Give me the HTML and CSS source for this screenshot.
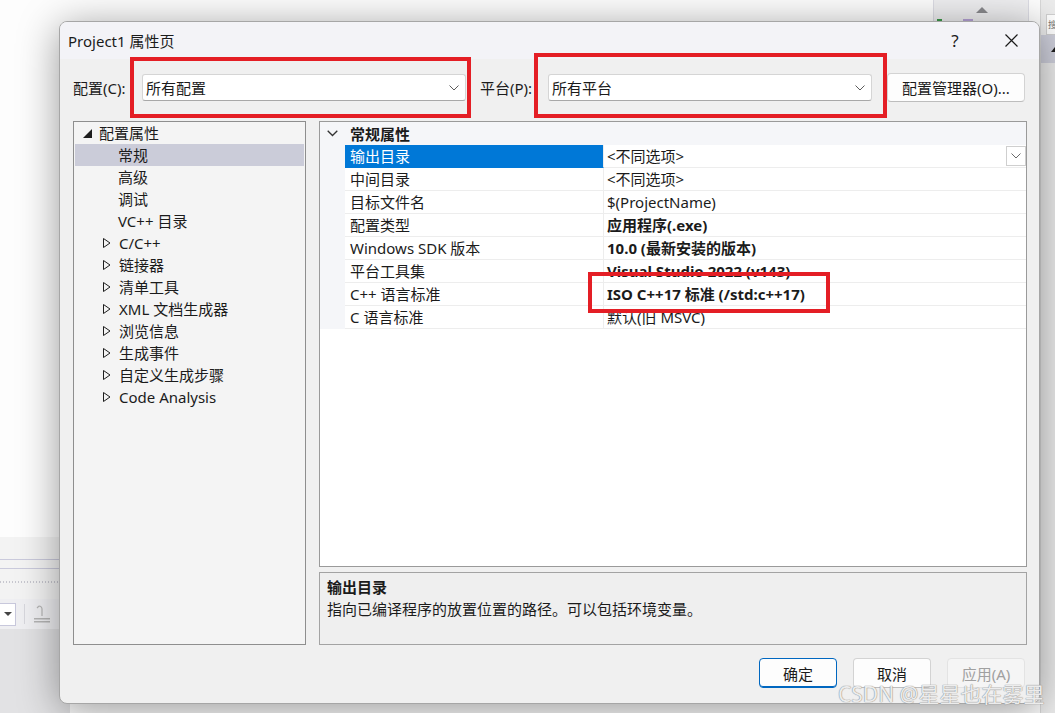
FILE: index.html
```html
<!DOCTYPE html>
<html lang="zh-CN">
<head>
<meta charset="UTF-8">
<meta name="viewport" content="width=device-width, initial-scale=1.0">
<title>Project1 属性页</title>
<link rel="stylesheet" href="styles.css">
</head>
<body>
<div class="desktop">
    <!-- what shows of Visual Studio behind the dialog -->
    <div class="vs-top">
        <span class="vs-arrow"></span>
        <span class="vs-mark green"></span>
        <span class="vs-mark purple"></span>
    </div>
    <div class="vs-bottom">
        <div class="vs-line"></div>
        <div class="vs-line"></div>
        <div class="vs-dots"></div>
        <div class="vs-toolbar">
            <div class="vs-combo"><span class="vs-caret"></span></div>
            <div class="vs-sep"></div>
            <svg class="vs-icon" width="18" height="18" viewBox="0 0 18 18">
                <path d="M9 11 V4 a3 3 0 0 0 -3 -3 M6 1 L4 3" fill="none" stroke="#b5b5b5" stroke-width="1.2"/>
                <rect x="1" y="13" width="16" height="1.5" fill="#b5b5b5"/>
                <rect x="1" y="16" width="16" height="1.5" fill="#b5b5b5"/>
            </svg>
        </div>
        <div class="vs-fill"></div>
    </div>
    <div class="vs-right">
        <div class="vs-search">搜</div>
        <div class="vs-head"><span class="vs-head-arrow"></span></div>
    </div>

    <div class="dialog">
        <div class="titlebar">
            <span class="title">Project1 属性页</span>
            <span class="cap-btn help">?</span>
            <span class="cap-btn close">
                <svg width="13" height="13" viewBox="0 0 13 13">
                    <path d="M0.5 0.5 L12.5 12.5 M12.5 0.5 L0.5 12.5" stroke="#1a1a1a" stroke-width="1.2"/>
                </svg>
            </span>
        </div>

        <div class="dlg-body">
            <div class="config-row">
                <label class="lbl">配置(C):</label>
                <div class="combo">
                    <span>所有配置</span>
                    <svg width="10" height="6" viewBox="0 0 10 6"><path d="M0.5 0.5 L5 5 L9.5 0.5" fill="none" stroke="#5c5c5c" stroke-width="1"/></svg>
                </div>
                <label class="lbl lbl-p">平台(P):</label>
                <div class="combo">
                    <span>所有平台</span>
                    <svg width="10" height="6" viewBox="0 0 10 6"><path d="M0.5 0.5 L5 5 L9.5 0.5" fill="none" stroke="#5c5c5c" stroke-width="1"/></svg>
                </div>
                <button class="btn btn-mgr">配置管理器(O)...</button>
            </div>

            <div class="main">
                <div class="tree">
                    <div class="node root">
                        <svg class="tri" width="9" height="9" viewBox="0 0 9 9"><polygon points="9,0 9,9 0,9" fill="#1e1e1e"/></svg>
                        <span>配置属性</span>
                    </div>
                    <div class="node leaf selected">常规</div>
                    <div class="node leaf">高级</div>
                    <div class="node leaf">调试</div>
                    <div class="node leaf">VC++ 目录</div>
                    <div class="node folder">
                        <svg class="tri" width="8" height="10" viewBox="0 0 8 10"><polygon points="0.5,0.5 7,5 0.5,9.5" fill="none" stroke="#1e1e1e" stroke-width="1"/></svg>
                        <span>C/C++</span>
                    </div>
                    <div class="node folder">
                        <svg class="tri" width="8" height="10" viewBox="0 0 8 10"><polygon points="0.5,0.5 7,5 0.5,9.5" fill="none" stroke="#1e1e1e" stroke-width="1"/></svg>
                        <span>链接器</span>
                    </div>
                    <div class="node folder">
                        <svg class="tri" width="8" height="10" viewBox="0 0 8 10"><polygon points="0.5,0.5 7,5 0.5,9.5" fill="none" stroke="#1e1e1e" stroke-width="1"/></svg>
                        <span>清单工具</span>
                    </div>
                    <div class="node folder">
                        <svg class="tri" width="8" height="10" viewBox="0 0 8 10"><polygon points="0.5,0.5 7,5 0.5,9.5" fill="none" stroke="#1e1e1e" stroke-width="1"/></svg>
                        <span>XML 文档生成器</span>
                    </div>
                    <div class="node folder">
                        <svg class="tri" width="8" height="10" viewBox="0 0 8 10"><polygon points="0.5,0.5 7,5 0.5,9.5" fill="none" stroke="#1e1e1e" stroke-width="1"/></svg>
                        <span>浏览信息</span>
                    </div>
                    <div class="node folder">
                        <svg class="tri" width="8" height="10" viewBox="0 0 8 10"><polygon points="0.5,0.5 7,5 0.5,9.5" fill="none" stroke="#1e1e1e" stroke-width="1"/></svg>
                        <span>生成事件</span>
                    </div>
                    <div class="node folder">
                        <svg class="tri" width="8" height="10" viewBox="0 0 8 10"><polygon points="0.5,0.5 7,5 0.5,9.5" fill="none" stroke="#1e1e1e" stroke-width="1"/></svg>
                        <span>自定义生成步骤</span>
                    </div>
                    <div class="node folder">
                        <svg class="tri" width="8" height="10" viewBox="0 0 8 10"><polygon points="0.5,0.5 7,5 0.5,9.5" fill="none" stroke="#1e1e1e" stroke-width="1"/></svg>
                        <span>Code Analysis</span>
                    </div>
                </div>

                <div class="right">
                    <div class="grid">
                        <div class="grid-head">
                            <span class="gutter">
                                <svg width="11" height="7" viewBox="0 0 11 7"><path d="M0.7 0.7 L5.5 5.5 L10.3 0.7" fill="none" stroke="#333" stroke-width="1.3"/></svg>
                            </span>
                            <span class="head-text">常规属性</span>
                        </div>
                        <div class="prop selected">
                            <span class="gutter"></span>
                            <span class="name">输出目录</span>
                            <span class="value">&lt;不同选项&gt;
                                <span class="drop">
                                    <svg width="10" height="6" viewBox="0 0 10 6"><path d="M0.5 0.5 L5 5 L9.5 0.5" fill="none" stroke="#6a6a6a" stroke-width="1"/></svg>
                                </span>
                            </span>
                        </div>
                        <div class="prop">
                            <span class="gutter"></span>
                            <span class="name">中间目录</span>
                            <span class="value">&lt;不同选项&gt;</span>
                        </div>
                        <div class="prop">
                            <span class="gutter"></span>
                            <span class="name">目标文件名</span>
                            <span class="value">$(ProjectName)</span>
                        </div>
                        <div class="prop">
                            <span class="gutter"></span>
                            <span class="name">配置类型</span>
                            <span class="value bold">应用程序(.exe)</span>
                        </div>
                        <div class="prop">
                            <span class="gutter"></span>
                            <span class="name">Windows SDK 版本</span>
                            <span class="value bold">10.0 (最新安装的版本)</span>
                        </div>
                        <div class="prop">
                            <span class="gutter"></span>
                            <span class="name">平台工具集</span>
                            <span class="value bold">Visual Studio 2022 (v143)</span>
                        </div>
                        <div class="prop">
                            <span class="gutter"></span>
                            <span class="name">C++ 语言标准</span>
                            <span class="value bold">ISO C++17 标准 (/std:c++17)</span>
                        </div>
                        <div class="prop">
                            <span class="gutter"></span>
                            <span class="name">C 语言标准</span>
                            <span class="value">默认(旧 MSVC)</span>
                        </div>
                    </div>
                    <div class="desc">
                        <div class="desc-title">输出目录</div>
                        <div class="desc-text">指向已编译程序的放置位置的路径。可以包括环境变量。</div>
                    </div>
                </div>
            </div>

            <div class="buttons">
                <button class="btn btn-dlg default">确定</button>
                <button class="btn btn-dlg">取消</button>
                <button class="btn btn-dlg disabled">应用(A)</button>
            </div>
        </div>
    </div>

    <!-- red annotation frames drawn over the screenshot -->
    <div class="mark-box box-config"></div>
    <div class="mark-box box-platform"></div>
    <div class="mark-box box-std"></div>

    <div class="watermark">CSDN @星星也在雾里</div>
</div>
</body>
</html>
```

FILE: styles.css
```css
body {
  margin: 0;
  padding: 0;
  font-family: "Noto Sans", "Noto Sans CJK SC", sans-serif;
  font-size: 15px;
  color: #1b1b1b;
  background-color: #fff;
}

.desktop {
  position: relative;
  width: 1055px;
  height: 713px;
  overflow: hidden;
  background: #fdfdfd;
}

/* background app */
.vs-top {
  position: absolute;
  left: 933px;
  top: 0;
  width: 94px;
  height: 22px;
  background: #efeff1;
  border-left: 1px solid #dcdce4;
  border-right: 1px solid #dcdce4;
}

.vs-arrow {
  position: absolute;
  left: 42px;
  top: 7px;
  border-left: 6px solid transparent;
  border-right: 6px solid transparent;
  border-bottom: 6px solid #8a8a8e;
}

.vs-mark {
  position: absolute;
  top: 19px;
  width: 5px;
  height: 3px;
}

.vs-mark.green {
  left: 3px;
  background: #3c9a4a;
}

.vs-mark.purple {
  left: 29px;
  width: 10px;
  background: #b7a3d8;
}

.vs-bottom {
  position: absolute;
  left: 0;
  top: 537px;
  width: 70px;
  height: 176px;
  background: #f3f3f3;
  display: flex;
  flex-direction: column;
}

.vs-line {
  height: 1px;
  background: #cacadc;
  margin-top: 22px;
}

.vs-line + .vs-line {
  margin-top: 8px;
}

.vs-dots {
  height: 2px;
  margin-top: 12px;
  background-image: linear-gradient(90deg, #c7c7cf 50%, transparent 50%);
  background-size: 3px 2px;
}

.vs-toolbar {
  margin-top: 16px;
  height: 30px;
  display: flex;
  align-items: center;
  gap: 8px;
  background: #efeff2;
}

.vs-combo {
  width: 16px;
  height: 23px;
  box-sizing: border-box;
  background: #fff;
  border: 1px solid #c8c8dc;
  border-left: none;
  display: flex;
  align-items: center;
  justify-content: center;
}

.vs-caret {
  border-left: 4px solid transparent;
  border-right: 4px solid transparent;
  border-top: 4px solid #444;
}

.vs-sep {
  width: 1px;
  height: 20px;
  background: #d6d6dc;
}

.vs-fill {
  flex: 1;
  background: #e2e2e4;
}

.vs-right {
  position: absolute;
  left: 1040px;
  top: 0;
  width: 15px;
  height: 713px;
  background: #ececec;
  border-left: 1px solid #d8d8d8;
}

.vs-search {
  margin: 14px 0 0 5px;
  height: 19px;
  background: #fff;
  border: 1px solid #d0d0d0;
  border-right: none;
  font-size: 9px;
  line-height: 19px;
  padding-left: 1px;
  color: #777;
  overflow: hidden;
}

.vs-head {
  height: 28px;
  background: #cfd0dc;
  display: flex;
  align-items: center;
  padding-left: 10px;
}

.vs-head-arrow {
  border-left: 4px solid transparent;
  border-right: 4px solid transparent;
  border-bottom: 5px solid #1e1e1e;
}

/* dialog window */
.dialog {
  position: absolute;
  left: 59px;
  top: 21px;
  width: 981px;
  height: 683px;
  box-sizing: border-box;
  border: 1px solid #a6a6a6;
  border-radius: 8px;
  background: #f0f0f0;
  box-shadow: 0 6px 40px rgba(0, 0, 0, 0.4);
  overflow: hidden;
  display: flex;
  flex-direction: column;
}

.titlebar {
  height: 37px;
  background: #f3f3f7;
  display: flex;
  align-items: center;
  padding-left: 8px;
}

.title {
  flex: 1;
  line-height: 20px;
}

.cap-btn {
  width: 46px;
  height: 37px;
  display: flex;
  align-items: center;
  justify-content: center;
}

.help {
  font-size: 17px;
  margin-right: 10px;
}

.close {
  margin-right: 5px;
}

.dlg-body {
  flex: 1;
  padding: 14px 12px 15px 13px;
  display: flex;
  flex-direction: column;
}

.config-row {
  height: 29px;
  display: flex;
  align-items: center;
}

.lbl {
  width: 69px;
  line-height: 20px;
}

.lbl-p {
  width: 68px;
  margin-left: 14px;
}

.combo {
  width: 324px;
  height: 27px;
  box-sizing: border-box;
  background: #fff;
  border: 1px solid #d5d5d5;
  border-bottom-color: #a8a8a8;
  border-radius: 3px;
  display: flex;
  align-items: center;
  justify-content: space-between;
  padding: 0 6px 0 3px;
}

.btn {
  font-family: inherit;
  font-size: 15px;
  color: #1b1b1b;
  background: #fdfdfd;
  border: 1px solid #d3d3d3;
  border-bottom-color: #bdbdbd;
  border-radius: 4px;
  padding: 0;
  cursor: pointer;
}

.btn-mgr {
  width: 138px;
  height: 29px;
  margin-left: 15px;
}

.main {
  margin-top: 19px;
  height: 524px;
  display: flex;
  gap: 13px;
}

/* category tree */
.tree {
  width: 233px;
  box-sizing: border-box;
  border: 1px solid #8e8e8e;
  background: #f4f4f4;
}

.node {
  height: 22px;
  margin: 0 1px;
  display: flex;
  align-items: center;
  line-height: 20px;
}

.node.root {
  padding-left: 8px;
  gap: 7px;
}

.node.leaf {
  padding-left: 43px;
}

.node.folder {
  padding-left: 28px;
  gap: 8px;
}

.node.selected {
  background: #cbccd9;
}

/* property grid */
.right {
  flex: 1;
  display: flex;
  flex-direction: column;
  gap: 5px;
}

.grid {
  flex: 1;
  background: #fff;
  border: 1px solid #9a9a9a;
}

.grid-head {
  height: 23px;
  display: flex;
  align-items: center;
  background: #f5f6f9;
}

.gutter {
  width: 25px;
  align-self: stretch;
  display: flex;
  align-items: center;
  justify-content: center;
  background: #f5f6f9;
}

.head-text {
  font-weight: bold;
  padding-left: 5px;
}

.prop {
  height: 23px;
  display: flex;
  line-height: 20px;
}

.prop .name {
  width: 259px;
  box-sizing: border-box;
  padding: 1px 0 0 5px;
  border-right: 1px solid #ededed;
  border-bottom: 1px solid #ededed;
}

.prop .value {
  flex: 1;
  padding: 1px 0 0 3px;
  border-bottom: 1px solid #ededed;
  position: relative;
}

.prop.selected .name {
  background: #0078d7;
  color: #fff;
  border-bottom-color: #0078d7;
}

.bold {
  font-weight: bold;
}

.drop {
  position: absolute;
  right: 0;
  top: 1px;
  width: 20px;
  height: 20px;
  box-sizing: border-box;
  border: 1px solid #cfcfcf;
  background: #fff;
  display: flex;
  align-items: center;
  justify-content: center;
}

.desc {
  height: 73px;
  box-sizing: border-box;
  border: 1px solid #a3a3a3;
  background: #efefef;
  padding: 3px 7px;
  line-height: 22px;
}

.desc-title {
  font-weight: bold;
}

/* dialog buttons */
.buttons {
  margin-top: 13px;
  margin-right: 2px;
  display: flex;
  justify-content: flex-end;
  gap: 16px;
}

.btn-dlg {
  width: 78px;
  height: 30px;
}

.btn-dlg.default {
  border: 1px solid #0067c0;
  box-shadow: inset 0 -1px 0 #0067c0;
}

.btn-dlg.disabled {
  color: #a0a0a0;
  background: #f5f5f5;
  border-color: #e3e3e3;
}

/* annotations */
.mark-box {
  position: absolute;
  box-sizing: border-box;
  border: 4px solid #e41e25;
}

.box-config {
  left: 130px;
  top: 57px;
  width: 341px;
  height: 61px;
}

.box-platform {
  left: 534px;
  top: 53px;
  width: 353px;
  height: 65px;
}

.box-std {
  left: 588px;
  top: 272px;
  width: 242px;
  height: 41px;
}

.watermark {
  position: absolute;
  left: 838px;
  top: 683px;
  font-size: 21px;
  line-height: 22px;
  color: rgba(255, 255, 255, 0.85);
  text-shadow: 0 0 1px #8a8a8a, 0 0 1px #8a8a8a;
  white-space: nowrap;
}
```
